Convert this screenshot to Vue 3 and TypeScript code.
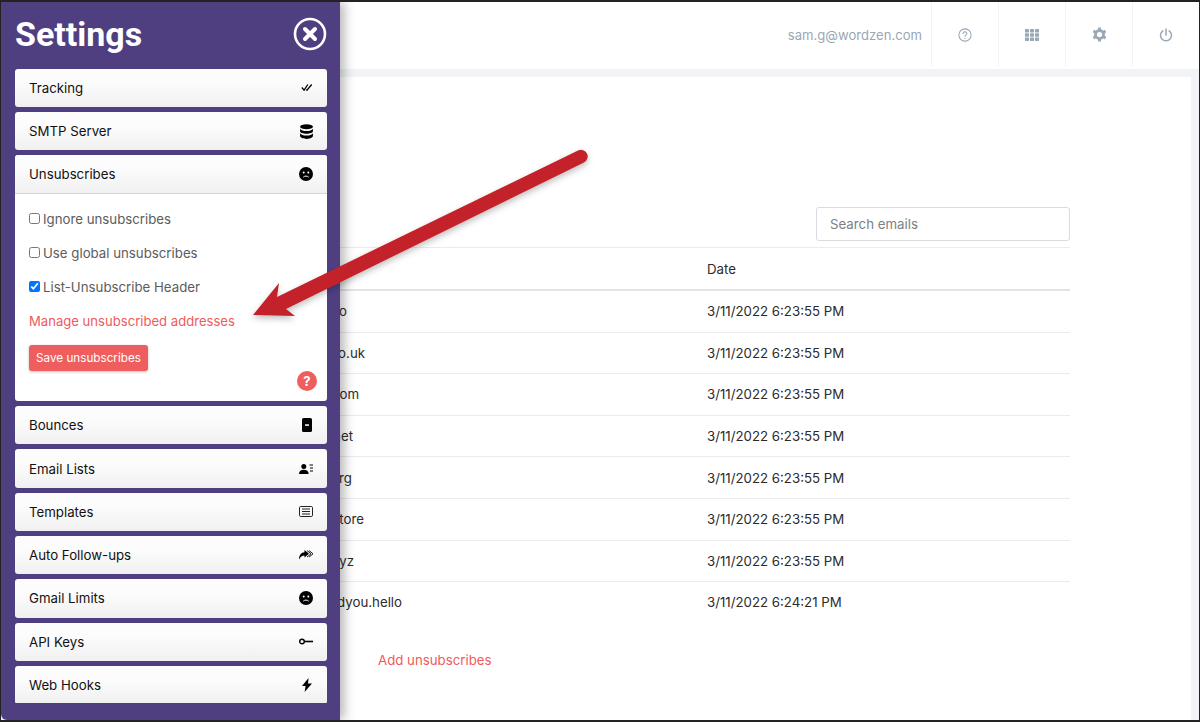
<script setup lang="ts">
interface Row {
  email: string
  width: number // where the address ends, measured from the table's left edge
  date: string
}

const rows: Row[] = [
  { email: 'news@mailer.co', width: 216, date: '3/11/2022 6:23:55 PM' },
  { email: 'info@example.co.uk', width: 234, date: '3/11/2022 6:23:55 PM' },
  { email: 'admin@domain.com', width: 228, date: '3/11/2022 6:23:55 PM' },
  { email: 'hello@mailbox.net', width: 222, date: '3/11/2022 6:23:55 PM' },
  { email: 'contact@charity.org', width: 221, date: '3/11/2022 6:23:55 PM' },
  { email: 'sales@online.store', width: 233, date: '3/11/2022 6:23:55 PM' },
  { email: 'team@startup.xyz', width: 223, date: '3/11/2022 6:23:55 PM' },
  { email: 'sam@andyou.hello', width: 271, date: '3/11/2022 6:24:21 PM' },
]

const before = ['Tracking', 'SMTP Server']
const after = ['Bounces', 'Email Lists', 'Templates', 'Auto Follow-ups', 'Gmail Limits', 'API Keys', 'Web Hooks']
</script>

<template>
  <div class="page">
    <header class="topbar">
      <span class="user">sam.g@wordzen.com</span>
      <div class="top-btn">
        <svg viewBox="0 0 16 16" width="14" height="14" fill="none" stroke="#9aa7b4" stroke-width="1.2">
          <circle cx="8" cy="8" r="7" />
          <path d="M5.900 6.200a2.100 2 0 1 1 3.300 1.700c-.8.500-1.200.9-1.200 1.700" stroke-linecap="round" />
          <circle cx="8" cy="11.800" r=".8" fill="#9aa7b4" stroke="none" />
        </svg>
      </div>
      <div class="top-btn">
        <svg viewBox="0 0 14 12" width="14" height="12" fill="#9aa7b4">
          <rect x="0" y="0" width="4" height="3.400" rx=".6" /><rect x="5" y="0" width="4" height="3.400" rx=".6" /><rect x="10" y="0" width="4" height="3.400" rx=".6" />
          <rect x="0" y="4.300" width="4" height="3.400" rx=".6" /><rect x="5" y="4.300" width="4" height="3.400" rx=".6" /><rect x="10" y="4.300" width="4" height="3.400" rx=".6" />
          <rect x="0" y="8.600" width="4" height="3.400" rx=".6" /><rect x="5" y="8.600" width="4" height="3.400" rx=".6" /><rect x="10" y="8.600" width="4" height="3.400" rx=".6" />
        </svg>
      </div>
      <div class="top-btn">
        <svg viewBox="0 0 16 16" width="15" height="15">
          <circle cx="8" cy="8" r="4.300" fill="none" stroke="#9aa7b4" stroke-width="3" />
          <path d="M8 .5v3.500M8 12v3.500M1.500 4.200l3 1.800M11.500 10l3 1.800M1.500 11.800l3-1.800M11.500 6l3-1.800" stroke="#9aa7b4" stroke-width="3" />
        </svg>
      </div>
      <div class="top-btn">
        <svg viewBox="0 0 16 16" width="14" height="14" fill="none" stroke="#9aa7b4" stroke-width="1.700" stroke-linecap="round">
          <path d="M8 1v7" />
          <path d="M4.400 3.200a6.300 6.300 0 1 0 7.200 0" />
        </svg>
      </div>
    </header>

    <main class="band">
      <section class="card">
        <div class="search-row">
          <input class="search" type="text" placeholder="Search emails">
        </div>
        <table class="emails">
          <thead>
            <tr>
              <th class="col-email">Email</th>
              <th>Date</th>
            </tr>
          </thead>
          <tbody>
            <tr v-for="row in rows" :key="row.email">
              <td class="col-email"><span class="addr" :style="{ width: row.width + 'px' }">{{ row.email }}</span></td>
              <td>{{ row.date }}</td>
            </tr>
          </tbody>
        </table>
        <a class="add-link">Add unsubscribes</a>
      </section>
    </main>

    <aside class="panel">
      <div class="panel-head">
        <h1>Settings</h1>
        <svg viewBox="0 0 34 34" width="34" height="34" fill="none" stroke="#fff">
          <circle cx="17" cy="17" r="15" stroke-width="2.600" />
          <path d="M12 12l10 10M22 12L12 22" stroke-width="4" stroke-linecap="round" />
        </svg>
      </div>
      <div class="acc-list">
        <div v-for="title in before" :key="title" class="acc-head">
          <span>{{ title }}</span>
          <svg v-if="title === 'Tracking'" viewBox="0 0 14 10" width="12" height="9" fill="none" stroke="#000" stroke-width="1.500">
            <path d="M1 5l2.600 3L8 1.500M6 7.500l1 .6L12.500 1.500" />
          </svg>
          <svg v-else viewBox="0 0 12 14" width="13" height="15" fill="#000">
            <ellipse cx="6" cy="2.600" rx="6" ry="2.400" />
            <path d="M0 4.400c1 1.600 3 2.100 6 2.100s5-.5 6-2.100v2.300c0 1.300-2.700 2.300-6 2.300S0 8 0 6.700z" />
            <path d="M0 8.700c1 1.600 3 2.100 6 2.100s5-.5 6-2.100v2.600C12 12.700 9.300 14 6 14s-6-1.300-6-2.700z" />
          </svg>
        </div>

        <div class="acc-open">
          <div class="acc-head open">
            <span>Unsubscribes</span>
            <svg viewBox="0 0 14 14" width="14" height="14">
              <circle cx="7" cy="7" r="7" fill="#000" />
              <circle cx="4.700" cy="5.600" r="1" fill="#fff" /><circle cx="9.300" cy="5.600" r="1" fill="#fff" />
              <path d="M4.300 10.200c1.500-1.500 3.900-1.500 5.400 0" fill="none" stroke="#fff" stroke-width="1" />
            </svg>
          </div>
          <div class="acc-body">
            <label class="check"><input type="checkbox">Ignore unsubscribes</label>
            <label class="check"><input type="checkbox">Use global unsubscribes</label>
            <label class="check"><input type="checkbox" checked>List-Unsubscribe Header</label>
            <a class="manage">Manage unsubscribed addresses</a>
            <button class="save" type="button">Save unsubscribes</button>
            <span class="help">?</span>
          </div>
        </div>

        <div v-for="title in after" :key="title" class="acc-head">
          <span>{{ title }}</span>
          <svg v-if="title === 'Bounces'" class="narrow" viewBox="0 0 10 14" width="10" height="14">
            <rect width="10" height="14" rx="1.600" fill="#000" />
            <rect x="3" y="6.300" width="4" height="1.500" fill="#fff" />
          </svg>
          <svg v-else-if="title === 'Email Lists'" viewBox="0 0 14 10" width="14" height="10" fill="#000">
            <circle cx="4.800" cy="2.500" r="2.500" />
            <path d="M0 10c0-3 2-4.300 4.800-4.300S9.600 7 9.600 10z" />
            <path d="M10.500 1h3.500M11 4h3M11 7h3" stroke="#000" stroke-width="1" />
          </svg>
          <svg v-else-if="title === 'Templates'" viewBox="0 0 14 11" width="14" height="11" fill="none" stroke="#222">
            <rect x=".5" y=".5" width="13" height="10" rx="1.200" />
            <path d="M3 3h8M3 5.500h8M3 8h8" stroke-width="1.200" />
          </svg>
          <svg v-else-if="title === 'Auto Follow-ups'" viewBox="0 0 14 10" width="14" height="10">
            <path d="M5.500 0L10 3.800 5.500 7.600V5.400C3 5.400 1.400 6.400 0 9.500c0-4.200 2.200-7 5.500-7.200z" fill="#000" />
            <path d="M8 .5l4 3.300-4 3.300M10 .5l4 3.300-4 3.300" fill="none" stroke="#000" stroke-width=".9" />
          </svg>
          <svg v-else-if="title === 'Gmail Limits'" viewBox="0 0 14 14" width="14" height="14">
            <circle cx="7" cy="7" r="7" fill="#000" />
            <circle cx="4.700" cy="5.600" r="1" fill="#fff" /><circle cx="9.300" cy="5.600" r="1" fill="#fff" />
            <path d="M4.300 10.200c1.500-1.500 3.900-1.500 5.400 0" fill="none" stroke="#fff" stroke-width="1" />
          </svg>
          <svg v-else-if="title === 'API Keys'" viewBox="0 0 14 7" width="14" height="7">
            <circle cx="3" cy="3.500" r="2.300" fill="none" stroke="#000" stroke-width="1.400" />
            <path d="M5 2.700h9v1.600H5z" fill="#000" />
          </svg>
          <svg v-else class="narrow" viewBox="0 0 10 14" width="10" height="14" fill="#000">
            <path d="M6.500 0L0 8h3.600L2.600 14 10 5.500H6z" />
          </svg>
        </div>
      </div>
    </aside>

    <svg class="arrow" viewBox="0 0 1200 722" width="1200" height="722">
      <defs>
        <filter id="arrow-shadow" x="-10%" y="-10%" width="120%" height="130%">
          <feDropShadow dx="0" dy="3" stdDeviation="3" flood-color="#000" flood-opacity=".25" />
        </filter>
      </defs>
      <path
        d="M253 315L279 283L277 297L578 150.500A6.700 6.700 0 0 1 584 162.500L286 309L295 316Z"
        fill="#c4232a"
        filter="url(#arrow-shadow)"
      />
    </svg>
  </div>
</template>

<style scoped>
.page {
  position: relative;
  width: 1200px;
  height: 722px;
  box-sizing: border-box;
  border: 1px solid #222;
  border-top-width: 2px;
  border-bottom-width: 2px;
  overflow: hidden;
  background: #fff;
  color: #2b2b2b;
  font-family: Inter, "Liberation Sans", sans-serif;
  font-size: 13.250px;
  display: flex;
  flex-direction: column;
}

/* top bar */
.topbar {
  height: 67px;
  flex-shrink: 0;
  display: flex;
  justify-content: flex-end;
  align-items: stretch;
  background: #fff;
}

.user {
  align-self: center;
  margin-right: 9px;
  padding-bottom: 1px;
  font-size: 13.100px;
  color: #9aa7b4;
}

.top-btn {
  width: 66px;
  display: flex;
  align-items: center;
  justify-content: center;
  border-left: 1px solid #f1f3f5;
  margin-bottom: 2px;
}

.band {
  flex: 1;
  background: #f1f3f6;
  padding: 8px 8px 0 0;
  min-height: 0;
}

.card {
  height: 100%;
  box-sizing: border-box;
  background: #fff;
  padding: 0 121px 0 130px;
}

.search-row {
  display: flex;
  justify-content: flex-end;
  padding-top: 130px;
}

.search {
  width: 254px;
  height: 34px;
  box-sizing: border-box;
  border: 1px solid #d8dbe0;
  border-radius: 3px;
  padding: 0 13px;
  font: inherit;
  outline: none;
}

.search::placeholder {
  color: #7a7f85;
}

.emails {
  width: 100%;
  margin-top: 6px;
  border-collapse: collapse;
  table-layout: fixed;
}

.emails th,
.emails td {
  padding: 0;
  height: 40.600px;
  text-align: left;
  font-weight: 400;
  border-top: 1px solid #e9ecef;
}

.emails thead th {
  height: 41px;
  border-bottom: 2px solid #e2e5e8;
}

.emails tbody tr:first-child td {
  border-top: 0;
}

.col-email {
  width: 576px;
}

.addr {
  display: block;
  text-align: right;
  white-space: nowrap;
  overflow: hidden;
}

.add-link {
  display: block;
  margin: 29px 0 0 247px;
  color: #ef5b5b;
}

/* settings drawer */
.panel {
  position: absolute;
  left: 0;
  top: 0;
  bottom: 0;
  width: 339px;
  box-sizing: border-box;
  padding: 0 13px 17px 14px;
  background: #4f3f80;
  border-bottom-left-radius: 6px;
  box-shadow: 4px 0 12px rgba(0, 0, 0, .3);
  display: flex;
  flex-direction: column;
}

.panel-head {
  height: 66.700px;
  flex-shrink: 0;
  box-sizing: border-box;
  padding-bottom: 3px;
  display: flex;
  align-items: center;
  justify-content: space-between;
}

.panel-head h1 {
  margin: 1px 0 0;
  color: #fff;
  font-family: Roboto, sans-serif;
  font-size: 34px;
  font-weight: 700;
}

.acc-list {
  flex: 1;
  min-height: 0;
  overflow: hidden;
  display: flex;
  flex-direction: column;
  gap: 5px;
}

.acc-head {
  height: 38.300px;
  flex-shrink: 0;
  box-sizing: border-box;
  padding: 0 14px;
  display: flex;
  align-items: center;
  justify-content: space-between;
  border-radius: 3px;
  background: linear-gradient(#fcfcfc 35%, #f0f0f0);
  color: #111;
}

.acc-head svg {
  flex-shrink: 0;
}

.acc-head svg.narrow {
  margin-right: 1px;
}

.acc-head.open {
  border-bottom: 1px solid #d8d8d8;
  border-radius: 3px 3px 0 0;
}

.acc-open {
  flex-shrink: 0;
  background: #fff;
  border-radius: 3px;
}

.acc-body {
  position: relative;
  height: 207.500px;
  box-sizing: border-box;
  padding: 8px 14px 0;
  color: #5c5c5c;
}

.check {
  display: flex;
  align-items: center;
  height: 34px;
}

.check input {
  width: 11px;
  height: 11px;
  margin: 0 3px 0 0;
}

.manage {
  display: block;
  height: 34px;
  line-height: 34px;
  font-size: 13.100px;
  color: #ef5b5b;
}

.save {
  display: block;
  margin-top: 7px;
  width: 119px;
  height: 26px;
  border: 0;
  border-radius: 3px;
  background: #ef5e5e;
  box-shadow: 0 1px 3px rgba(0, 0, 0, .25);
  color: #fff;
  font: inherit;
  font-size: 11.700px;
}

.help {
  position: absolute;
  right: 10px;
  bottom: 10px;
  width: 20px;
  height: 20px;
  border-radius: 50%;
  background: #ef5e5e;
  color: #fff;
  font-weight: 700;
  font-size: 13px;
  line-height: 20px;
  text-align: center;
}

.arrow {
  position: absolute;
  left: -1px;
  top: -2px;
  pointer-events: none;
}
</style>
